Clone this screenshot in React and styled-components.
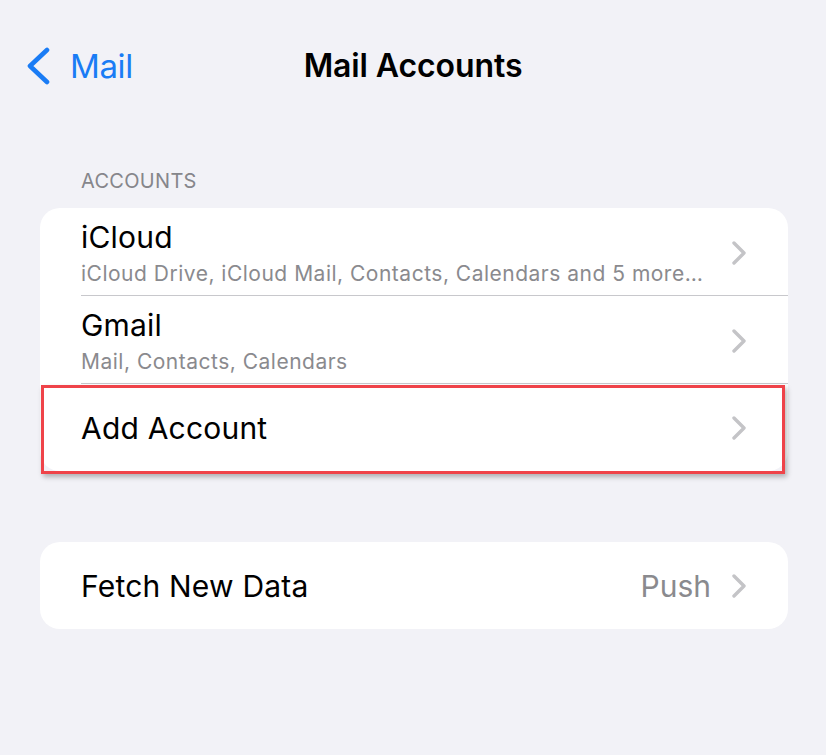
import React from "react";
import styled, { createGlobalStyle } from "styled-components";

const GlobalStyle = createGlobalStyle`
  html, body { margin: 0; padding: 0; background: #f2f2f7; }
  body { font-family: Inter, "Noto Sans", "Liberation Sans", sans-serif; -webkit-font-smoothing: antialiased; }
`;

const Page = styled.div`
  width: 826px;
  min-height: 755px;
  background: #f2f2f7;
  display: flex;
  flex-direction: column;
`;

const NavBar = styled.header`
  height: 132px;
  display: grid;
  grid-template-columns: 1fr auto 1fr;
  align-items: center;
  padding: 0 27px;
`;

const BackButton = styled.button`
  justify-self: start;
  display: flex;
  align-items: center;
  gap: 20px;
  border: 0;
  background: none;
  padding: 0;
  color: #1a7cf5;
  font: 400 33px/40px Inter, "Liberation Sans", sans-serif;
  letter-spacing: -0.4px;
  cursor: pointer;
`;

const Title = styled.h1`
  margin: 0;
  font: 600 32px/40px Inter, "Liberation Sans", sans-serif;
  letter-spacing: -0.1px;
  color: #000;
`;

const SectionHeader = styled.div`
  padding: 37px 0 0 81px;
  height: 76px;
  box-sizing: border-box;
  font: 400 20px/24px Inter, "Liberation Sans", sans-serif;
  letter-spacing: 0.3px;
  color: #86868b;
  text-transform: uppercase;
`;

const Card = styled.section`
  margin: ${(p) => p.$top}px 38px 0 40px;
  background: #fff;
  border-radius: 20px;
  position: relative;
`;

const Row = styled.div`
  position: relative;
  padding-left: 41px;
`;

const RowBody = styled.div`
  display: flex;
  align-items: center;
  min-height: 87px;
  box-sizing: border-box;
  padding: ${(p) => (p.$twoLine ? "11px 42px 8px 0" : "0 42px 0 0")};
  border-bottom: ${(p) => (p.$last ? "none" : "1px solid #c8c8cc")};
`;

const Texts = styled.div`
  flex: 1;
  min-width: 0;
  display: flex;
  flex-direction: column;
  gap: 6px;
`;

const RowTitle = styled.div`
  font: 400 30px/36px Inter, "Liberation Sans", sans-serif;
  letter-spacing: 0.2px;
  color: #000;
`;

const RowSubtitle = styled.div`
  font: 400 21px/26px Inter, "Liberation Sans", sans-serif;
  letter-spacing: 0.5px;
  color: #8a8a8e;
  white-space: nowrap;
  overflow: hidden;
  text-overflow: ellipsis;
  padding-right: 28px;
`;

const Detail = styled.span`
  font: 400 30px/36px Inter, "Liberation Sans", sans-serif;
  color: #8a8a8e;
  margin-right: 21px;
`;

const Highlight = styled.div`
  position: absolute;
  top: 1px;
  left: 1px;
  right: 3px;
  bottom: -3px;
  border: 3px solid #ef4349;
  box-shadow: 2px 3px 5px rgba(0, 0, 0, 0.28);
  pointer-events: none;
`;

const Chevron = () => (
  <svg width="14" height="24" viewBox="0 0 14 24" fill="none" style={{ flexShrink: 0 }}>
    <polyline points="2,2 12,12 2,22" stroke="#c4c4c7" strokeWidth="3.4" strokeLinecap="round" strokeLinejoin="round" />
  </svg>
);

const BackChevron = () => (
  <svg width="23" height="38" viewBox="0 0 23 38" fill="none">
    <polyline points="20,3 3,19 20,35" stroke="#1a7cf5" strokeWidth="4.6" strokeLinecap="round" strokeLinejoin="round" />
  </svg>
);

const accounts = [
  { title: "iCloud", sub: "iCloud Drive, iCloud Mail, Contacts, Calendars and 5 more…" },
  { title: "Gmail", sub: "Mail, Contacts, Calendars" },
];

export default function App() {
  return (
    <>
      <GlobalStyle />
      <Page>
        <NavBar>
          <BackButton>
            <BackChevron />
            Mail
          </BackButton>
          <Title>Mail Accounts</Title>
          <span />
        </NavBar>
        <SectionHeader>Accounts</SectionHeader>
        <Card $top={0}>
          {accounts.map((a) => (
            <Row key={a.title}>
              <RowBody $twoLine>
                <Texts>
                  <RowTitle>{a.title}</RowTitle>
                  <RowSubtitle>{a.sub}</RowSubtitle>
                </Texts>
                <Chevron />
              </RowBody>
            </Row>
          ))}
          <Row>
            <RowBody $last>
              <Texts>
                <RowTitle>Add Account</RowTitle>
              </Texts>
              <Chevron />
            </RowBody>
            <Highlight />
          </Row>
        </Card>
        <Card $top={71}>
          <Row>
            <RowBody $last>
              <Texts>
                <RowTitle>Fetch New Data</RowTitle>
              </Texts>
              <Detail>Push</Detail>
              <Chevron />
            </RowBody>
          </Row>
        </Card>
      </Page>
    </>
  );
}
